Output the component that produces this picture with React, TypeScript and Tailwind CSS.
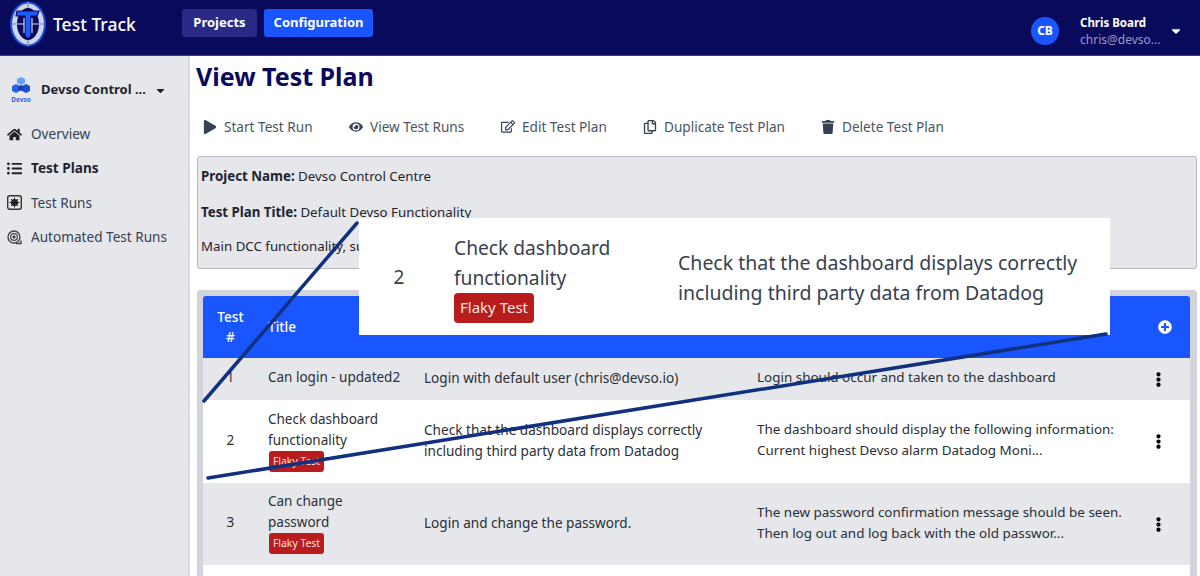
import React from "react";
import {
  FaPlay,
  FaEye,
  FaRegEdit,
  FaRegCopy,
  FaTrash,
  FaHome,
  FaListUl,
  FaEllipsisV,
  FaPlusCircle,
  FaCaretDown,
} from "react-icons/fa";

const font = { fontFamily: '"Noto Sans", sans-serif' };

const Logo = () => (
  <svg width="38" height="48" viewBox="0 0 38 48" className="shrink-0">
    <ellipse cx="19" cy="24" rx="18" ry="22.5" fill="#1d4ed8" />
    <ellipse cx="19" cy="24" rx="16" ry="20.5" fill="#cdd5ea" />
    <ellipse cx="19" cy="24" rx="11" ry="16" fill="#0a0a5c" />
    <path d="M3 24h32M19 2v6M19 40v6" stroke="#8f9bc4" strokeWidth="1.6" />
    <path d="M8 11h22l-2 5h-6v20l-3 3-3-3V16H7z" fill="#1d5cff" stroke="#0a0a5c" strokeWidth="1.2" />
    <path d="M15 18v15M23 18v15" stroke="#cdd5ea" strokeWidth="1.2" />
  </svg>
);

const DevsoLogo = () => (
  <div className="flex w-[24px] flex-col items-center">
    <svg width="20" height="18" viewBox="0 0 20 18">
      <path d="M10 0l4 2v4l-4 2-4-2V2z" fill="#60a5fa" />
      <path d="M5 7l4 2v5l-4 2-4-2V9z" fill="#2563eb" />
      <path d="M15 7l4 2v5l-4 2-4-2V9z" fill="#1d4ed8" />
      <path d="M10 8l3 1.5v3l-3 1.5-3-1.5v-3z" fill="#1e40af" />
    </svg>
    <span className="mt-[1px] text-[6.5px] leading-[7px] font-bold text-[#2563eb]">Devso</span>
  </div>
);

const TestRunsIcon = () => (
  <svg width="15" height="15" viewBox="0 0 15 15">
    <rect x="0.7" y="0.7" width="13.6" height="13.6" rx="2" fill="none" stroke="#333" strokeWidth="1.4" />
    <circle cx="7.5" cy="7.5" r="3.6" fill="#222" />
    <path d="M7.5 2.5v10M2.5 7.5h10M4 4l7 7M11 4l-7 7" stroke="#222" strokeWidth="1" />
  </svg>
);

const AutoIcon = () => (
  <svg width="15" height="15" viewBox="0 0 15 15" fill="none" stroke="#444">
    <circle cx="7" cy="7" r="6" strokeWidth="1.4" />
    <circle cx="7" cy="7" r="3.4" strokeWidth="1.2" />
    <circle cx="7" cy="7" r="1.2" fill="#444" />
    <path d="M9 13.5h5v-3" strokeWidth="1.4" />
  </svg>
);

const navItems = [
  { label: "Overview", icon: <FaHome size={15} />, active: false },
  { label: "Test Plans", icon: <FaListUl size={15} />, active: true },
  { label: "Test Runs", icon: <TestRunsIcon />, active: false },
  { label: "Automated Test Runs", icon: <AutoIcon />, active: false },
];

const actions = [
  { label: "Start Test Run", icon: <FaPlay size={14} />, width: "w-[146px]" },
  { label: "View Test Runs", icon: <FaEye size={14} />, width: "w-[152px]" },
  { label: "Edit Test Plan", icon: <FaRegEdit size={15} />, width: "w-[142px]" },
  { label: "Duplicate Test Plan", icon: <FaRegCopy size={14} />, width: "w-[178px]" },
  { label: "Delete Test Plan", icon: <FaTrash size={14} />, width: "w-[150px]" },
];

const FlakyBadge = () => (
  <span className="ml-[1px] block h-[21px] w-[55px] rounded-[3px] bg-[#b91c1c] text-center text-[10.4px] leading-[21px] text-[#f3e4e4]">
    Flaky Test
  </span>
);

const rows = [
  {
    id: 1,
    title: "Can login - updated2",
    flaky: false,
    description: "Login with default user (chris@devso.io)",
    expected: "Login should occur and taken to the dashboard",
    rowClass: "h-[42px] bg-[#e5e7eb]",
  },
  {
    id: 2,
    title: "Check dashboard functionality",
    flaky: true,
    description: "Check that the dashboard displays correctly including third party data from Datadog",
    expected: "The dashboard should display the following information: Current highest Devso alarm Datadog Moni...",
    rowClass: "h-[83px] bg-white",
  },
  {
    id: 3,
    title: "Can change password",
    flaky: true,
    description: "Login and change the password.",
    expected: "The new password confirmation message should be seen. Then log out and log back with the old passwor...",
    rowClass: "h-[82px] bg-[#e5e7eb]",
  },
];

export default function App() {
  return (
    <div className="relative flex h-[576px] w-[1200px] flex-col overflow-hidden bg-white text-[13.6px] text-[#2b2f36]" style={font}>
      <header className="flex h-[56px] shrink-0 items-start border-b border-[#3b3b7a] bg-[#0a0a5c] pr-[17px] pl-[9px]">
        <Logo />
        <span className="mt-[13px] ml-[6px] w-[129px] text-[17.5px] leading-[22px] font-medium text-white">Test Track</span>
        <button className="mt-[9px] h-[28px] w-[75px] rounded-[3px] bg-[#2a2a86] text-[13px] font-bold text-white">Projects</button>
        <button className="mt-[9px] ml-[7px] h-[28px] w-[109px] rounded-[3px] bg-[#1a56ff] text-[13px] font-bold text-white">Configuration</button>
        <div className="mt-[14px] ml-auto flex items-center">
          <div className="flex h-[28px] w-[28px] items-center justify-center rounded-full bg-[#1a56ff] text-[12px] font-bold text-white">CB</div>
          <div className="ml-[21px] w-[85px]">
            <div className="text-[11.5px] leading-[17px] font-bold text-white">Chris Board</div>
            <div className="truncate text-[12px] leading-[17px] text-[#9a9ac4]">chris@devso...</div>
          </div>
          <FaCaretDown size={14} className="ml-[4px] text-white" />
        </div>
      </header>

      <div className="flex min-h-0 flex-1">
        <aside className="w-[190px] shrink-0 border-r-2 border-[#d8dae0] bg-[#e5e7eb] pt-[21px]">
          <div className="flex items-center pl-[9px]">
            <DevsoLogo />
            <span className="ml-[8px] text-[13px] font-bold text-[#1f2430]">Devso Control ...</span>
            <FaCaretDown size={13} className="ml-[8px] text-[#1f2430]" />
          </div>
          <nav className="mt-[14px] flex flex-col">
            {navItems.map((item) => (
              <div key={item.label} className="flex h-[34.4px] items-center pl-[7px]">
                <span className="flex w-[24px] text-[#222]">{item.icon}</span>
                <span className={item.active ? "font-bold text-[#1f2430]" : "text-[#374151]"}>{item.label}</span>
              </div>
            ))}
          </nav>
        </aside>

        <main className="min-w-0 flex-1 pr-[3px] pl-[7px]">
          <h1 className="-ml-[1px] text-[25px] leading-[40px] font-bold text-[#0a0a5c]">View Test Plan</h1>
          <div className="mt-[10px] flex h-[42px] items-center pl-[6px] text-[#4b5563]">
            {actions.map((action) => (
              <div key={action.label} className={`flex items-center gap-[7px] ${action.width}`}>
                <span className="flex w-[14px] justify-center text-[#374151]">{action.icon}</span>
                <span>{action.label}</span>
              </div>
            ))}
          </div>
          <section className="mt-[8px] h-[113px] rounded-[3px] border border-[#b5b7c2] bg-[#e5e7eb] px-[3px] pt-[9px] text-[13.3px] leading-[20px] text-[#1f2430]">
            <p><strong>Project Name:</strong> Devso Control Centre</p>
            <p className="mt-[16px]"><strong>Test Plan Title:</strong> Default Devso Functionality</p>
            <p className="mt-[14px]">Main DCC functionality, such as the dashboard</p>
          </section>
          <section className="mt-[21px] rounded-[3px] bg-[#d1d5db] pt-[6px] pr-[7px] pl-[6px]">
            <table className="w-full table-fixed border-separate border-spacing-0 text-left">
              <colgroup>
                <col className="w-[55px]" />
                <col className="w-[166px]" />
                <col className="w-[333px]" />
                <col className="w-[381px]" />
                <col />
              </colgroup>
              <thead>
                <tr className="h-[62px] text-white">
                  <th className="rounded-tl-[3px] bg-[#1a56ff] text-center font-medium">Test<br />#</th>
                  <th className="bg-[#1a56ff] pl-[10px] font-medium">Title</th>
                  <th className="bg-[#1a56ff]"></th>
                  <th className="bg-[#1a56ff]"></th>
                  <th className="rounded-tr-[3px] bg-[#1a56ff] pr-[18px]"><FaPlusCircle size={14} className="ml-auto" /></th>
                </tr>
              </thead>
              <tbody>
                {rows.map((row) => (
                  <tr key={row.id} className={row.rowClass}>
                    <td className="pb-[3px] text-center">{row.id}</td>
                    <td className="pr-[20px] pb-[3px] pl-[10px] text-[13.5px] leading-[21px]">
                      <div className={row.flaky ? "w-[120px]" : ""}>{row.title}</div>
                      {row.flaky && <FlakyBadge />}
                    </td>
                    <td className="pr-[28px] pb-[3px] leading-[21px]">{row.description}</td>
                    <td className="pr-[8px] pb-[3px] text-[13.45px] leading-[21px]">{row.expected}</td>
                    <td className="pr-[12px]"><FaEllipsisV size={15} className="mx-auto text-black" /></td>
                  </tr>
                ))}
                <tr className="h-[40px] bg-white"><td colSpan={5}></td></tr>
              </tbody>
            </table>
          </section>
        </main>
      </div>

      {/* annotation over the page: zoomed row and the two guide lines */}
      <div className="absolute top-[218px] left-[359px] flex h-[117px] w-[751px] items-center bg-white pt-[1px] text-[#374151]">
        <span className="mr-[15px] w-[80px] text-center text-[19px]">2</span>
        <div className="w-[224px] pt-[1px]">
          <div className="text-[19.2px] leading-[30px]">Check dashboard functionality</div>
          <span className="block h-[30px] w-[80px] rounded-[4px] bg-[#b91c1c] text-center text-[15px] leading-[28px] text-[#f3e4e4]">Flaky Test</span>
        </div>
        <div className="w-[420px] pt-[2px] text-[19.5px] leading-[30px]">Check that the dashboard displays correctly including third party data from Datadog</div>
      </div>
      <svg className="pointer-events-none absolute inset-0" width="1200" height="576" viewBox="0 0 1200 576">
        <line x1="357" y1="223" x2="204" y2="401" stroke="#11307f" strokeWidth="3.5" strokeLinecap="round" />
        <line x1="208" y1="478" x2="1106" y2="334" stroke="#11307f" strokeWidth="3.5" strokeLinecap="round" />
      </svg>
    </div>
  );
}
